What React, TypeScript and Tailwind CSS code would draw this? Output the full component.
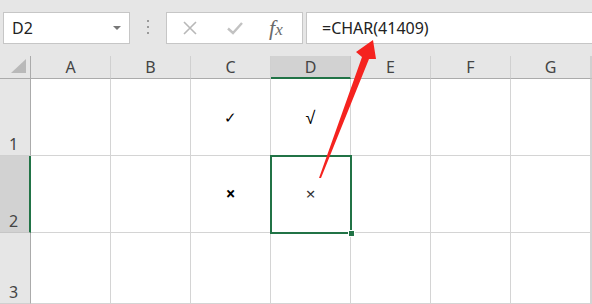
import React from "react";

const cols = ["A", "B", "C", "D", "E", "F", "G", ""];

const Cell: React.FC<{ children?: React.ReactNode; className?: string }> = ({ children, className = "" }) => (
  <div className={`flex items-center justify-center border-r border-b border-[#d4d4d4] bg-white ${className}`}>{children}</div>
);

const App: React.FC = () => {
  const rows = [
    { n: "1", c: <span className="text-[15px] text-black">✓</span>, d: <span className="text-[18px] text-black">√</span> },
    { n: "2", c: <span className="text-[17px] font-bold text-black">×</span>, d: <span className="text-[17px] text-[#333]">×</span> },
    { n: "3" },
  ];

  return (
    <div className="relative h-[304px] w-[592px] overflow-hidden bg-[#e6e6e6] font-['Noto_Sans','Liberation_Sans',sans-serif]">
      {/* Formula bar */}
      <div className="flex h-[56px] items-start pt-[12px]">
        <div className="ml-[3px] flex h-[32px] w-[127px] items-center justify-between border border-[#c6c6c6] bg-white pl-[8px] pr-[8px]">
          <span className="text-[16px] text-[#222]">D2</span>
          <span className="h-0 w-0 border-x-[4px] border-t-[4px] border-x-transparent border-t-[#777]" />
        </div>
        <div className="ml-[17px] mt-[8px] flex flex-col gap-[4px]">
          <span className="h-[2px] w-[2px] bg-[#9a9a9a]" />
          <span className="h-[2px] w-[2px] bg-[#9a9a9a]" />
          <span className="h-[2px] w-[2px] bg-[#9a9a9a]" />
        </div>
        <div className="ml-[17px] flex h-[32px] w-[137px] items-center border border-[#c6c6c6] bg-white">
          <svg width="16" height="16" viewBox="0 0 16 16" className="ml-[15px]">
            <path d="M2 2L14 14M14 2L2 14" stroke="#b8b8b8" strokeWidth="1.6" />
          </svg>
          <svg width="18" height="16" viewBox="0 0 18 16" className="ml-[28px]">
            <path d="M2 8.5L7 13L16 3" stroke="#c2c2c2" strokeWidth="2.4" fill="none" />
          </svg>
          <span className="ml-[25px] font-['Liberation_Serif',serif] text-[22px] italic leading-none text-[#6a6a6a]">
            f<span className="text-[17px]">x</span>
          </span>
        </div>
        <div className="ml-[3px] flex h-[32px] flex-1 items-center border border-r-0 border-[#c6c6c6] bg-white pl-[15px]">
          <span className="text-[16px] text-[#222]">=CHAR(41409)</span>
        </div>
      </div>

      {/* Sheet grid */}
      <div className="grid grid-cols-[31px_repeat(7,80px)_1fr] grid-rows-[23px_77px_77px_1fr] h-[248px]">
        <div className="relative border-r border-b border-[#ababab] bg-[#e6e6e6]">
          <svg width="16" height="15" viewBox="0 0 16 15" className="absolute bottom-[4px] right-[3px]">
            <path d="M15 0L15 14L0 14Z" fill="#b9b9b9" />
          </svg>
        </div>
        {cols.map((c) =>
          c === "D" ? (
            <div key={c} className="flex items-center justify-center border-r border-b-2 border-r-[#c6c6c6] border-b-[#217346] bg-[#d2d2d2] text-[16px] text-[#444]">
              {c}
            </div>
          ) : (
            <div key={c} className="flex items-center justify-center border-r border-b border-r-[#d0d0d0] border-b-[#ababab] text-[16px] text-[#444]">
              {c}
            </div>
          )
        )}
        {rows.map((r) => (
          <React.Fragment key={r.n}>
            <div
              className={`flex items-end border-b pb-[1px] pl-[9px] text-[16px] leading-[20px] text-[#444] ${
                r.n === "2" ? "border-r-2 border-r-[#217346] border-b-[#c6c6c6] bg-[#d2d2d2]" : "border-r border-r-[#ababab] border-b-[#d0d0d0] bg-[#e6e6e6]"
              }`}
            >
              {r.n}
            </div>
            <Cell />
            <Cell />
            <Cell>{r.c}</Cell>
            <Cell className="relative">
              {r.d}
              {r.n === "2" && (
                <div className="absolute -left-[1px] -top-[1px] z-10 h-[79px] w-[82px] border-2 border-[#217346]">
                  <span className="absolute -bottom-[5px] -right-[5px] h-[7px] w-[7px] border border-white bg-[#217346]" />
                </div>
              )}
            </Cell>
            <Cell />
            <Cell />
            <Cell />
            <Cell />
          </React.Fragment>
        ))}
      </div>

      {/* Red annotation arrow */}
      <svg className="pointer-events-none absolute left-0 top-0 z-20" width="592" height="304" viewBox="0 0 592 304">
        <polygon points="319,178 362,57 356,52 373,40 376,59 369,59 321,178" fill="#f5231f" />
      </svg>
    </div>
  );
};

export default App;
